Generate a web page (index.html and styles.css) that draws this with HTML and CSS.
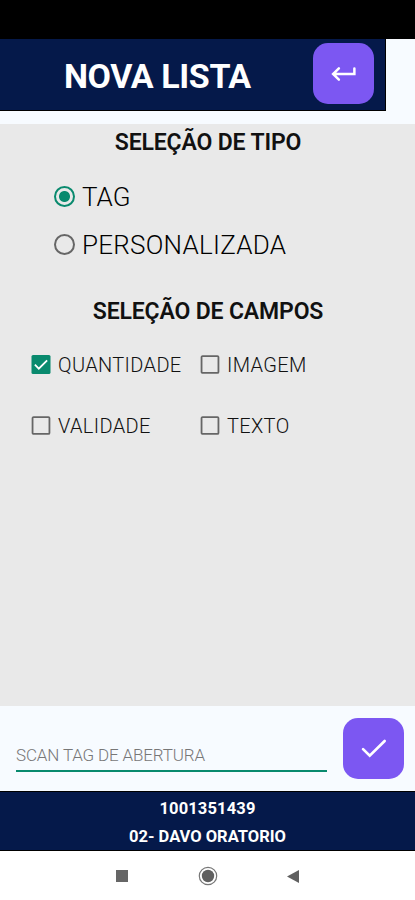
FILE: index.html
```
<!DOCTYPE html>
<html lang="pt-BR">

<head>
  <meta charset="UTF-8">
  <title>Nova Lista</title>
  <link rel="stylesheet" href="styles.css">
</head>

<body>
  <div class="status-bar"></div>

  <header class="header">
    <h1 class="title">NOVA LISTA</h1>
    <button class="btn" type="button" aria-label="Voltar">
      <svg class="icon" width="30" height="30" viewBox="0 0 24 24">
        <path d="M20.3 7.6V12H3.5M7.9 7.5L3.3 12l4.6 4.5" />
      </svg>
    </button>
  </header>

  <main class="content">
    <h2 class="subtitle">SELEÇÃO DE TIPO</h2>
    <div class="types">
      <label class="type"><input type="radio" name="tipo" checked><span>TAG</span></label>
      <label class="type"><input type="radio" name="tipo"><span class="custom">PERSONALIZADA</span></label>
    </div>

    <h2 class="subtitle fields-title">SELEÇÃO DE CAMPOS</h2>
    <div class="fields">
      <label class="field">
        <svg class="box checked" viewBox="0 0 18 18">
          <rect width="18" height="18" rx="1.5" />
          <path d="M3.2 9.2l3.7 3.7 7.9-7.9" />
        </svg>
        <span>QUANTIDADE</span>
      </label>
      <label class="field">
        <svg class="box" viewBox="0 0 18 18"><rect x="1" y="1" width="16" height="16" rx="1" /></svg>
        <span>IMAGEM</span>
      </label>
      <label class="field">
        <svg class="box" viewBox="0 0 18 18"><rect x="1" y="1" width="16" height="16" rx="1" /></svg>
        <span>VALIDADE</span>
      </label>
      <label class="field">
        <svg class="box" viewBox="0 0 18 18"><rect x="1" y="1" width="16" height="16" rx="1" /></svg>
        <span>TEXTO</span>
      </label>
    </div>
  </main>

  <form class="scan">
    <input class="scan-input" type="text" placeholder="SCAN TAG DE ABERTURA">
    <button class="btn" type="button" aria-label="Confirmar">
      <svg class="icon" width="32" height="32" viewBox="0 0 24 24">
        <path d="M3.8 12.1l5 4.9L20 6" />
      </svg>
    </button>
  </form>

  <footer class="footer">
    <span class="code">1001351439</span>
    <span class="store">02- DAVO ORATORIO</span>
  </footer>

  <nav class="nav">
    <svg width="20" height="20" viewBox="0 0 20 20"><rect x="4" y="4" width="12" height="12" fill="#666" /></svg>
    <svg width="20" height="20" viewBox="0 0 20 20">
      <circle cx="10" cy="10" r="8.7" fill="none" stroke="#777" stroke-width="1.2" />
      <circle cx="10" cy="10" r="6.2" fill="#606060" />
    </svg>
    <svg width="20" height="20" viewBox="0 0 20 20"><path d="M3 10.5L15 4v13z" fill="#606060" /></svg>
  </nav>
</body>

</html>
```

FILE: styles.css
```
* {
  box-sizing: border-box;
}

body {
  margin: 0;
  height: 900px;
  display: flex;
  flex-direction: column;
  overflow: hidden;
  font-family: Roboto, sans-serif;
  background-color: #f7fbff;
}

.status-bar {
  height: 39px;
  background-color: #000;
}

.header {
  display: flex;
  justify-content: space-between;
  align-items: flex-start;
  width: 386px;
  height: 72px;
  padding: 4px 11px 0 64px;
  margin-bottom: 13px;
  background-color: #05194a;
  border-right: 1px solid #000;
  border-bottom: 1px solid #000;
}

.title {
  margin: 13px 0 0;
  font-size: 34px;
  line-height: 41px;
  font-weight: 700;
  letter-spacing: -0.4px;
  color: #fff;
  white-space: nowrap;
}

.btn {
  display: flex;
  justify-content: center;
  align-items: center;
  flex: none;
  width: 61px;
  height: 61px;
  padding: 0;
  border: none;
  border-radius: 15px;
  background-color: #7c57f2;
}

.icon {
  fill: none;
  stroke: #fff;
  stroke-width: 2;
  stroke-linecap: round;
}

.content {
  height: 582px;
  padding-top: 5px;
  background-color: #e9e9e9;
}

.subtitle {
  margin: 0;
  padding-left: 1px;
  font-size: 23px;
  line-height: 28px;
  font-weight: 600;
  letter-spacing: -0.15px;
  text-align: center;
  color: #111;
}

.types {
  padding: 16px 0 0 54px;
}

.type {
  display: flex;
  align-items: center;
  gap: 7px;
  height: 48px;
  font-size: 26px;
  font-weight: 300;
  color: #000;
}

.type input {
  appearance: none;
  width: 21px;
  height: 21px;
  margin: 0 0 2px;
  border: 2px solid #666;
  border-radius: 50%;
}

.type input:checked {
  border-color: #098a6e;
  background: radial-gradient(circle, #098a6e 5px, transparent 6px);
}

.custom {
  letter-spacing: 0.25px;
}

.fields-title {
  margin-top: 29px;
}

.fields {
  display: grid;
  grid-template-columns: 169px 1fr;
  grid-auto-rows: 60px;
  row-gap: 1px;
  padding: 9px 0 0 31px;
}

.field {
  display: flex;
  align-items: center;
  gap: 7px;
  font-size: 20px;
  font-weight: 300;
  letter-spacing: 0.35px;
  color: #111;
}

.box {
  width: 20px;
  height: 19px;
  margin-bottom: 1px;
  fill: none;
  stroke: #666;
  stroke-width: 1.7;
}

.checked rect {
  fill: #098a6e;
  stroke: none;
}

.checked path {
  stroke: #fff;
}

/* scan row */
.scan {
  display: flex;
  align-items: flex-start;
  justify-content: space-between;
  height: 85px;
  padding: 12px 11px 0 16px;
}

.scan-input {
  width: 311px;
  height: 34px;
  margin-top: 20px;
  padding: 1px 0 0;
  border: none;
  border-bottom: 2px solid #098a6e;
  background: none;
  font-family: inherit;
  font-size: 17px;
  font-weight: 300;
  letter-spacing: -0.15px;
}

.scan-input::placeholder {
  color: #777;
}

.footer {
  display: flex;
  flex-direction: column;
  align-items: center;
  height: 60px;
  padding-top: 3px;
  border-top: 1px solid #000;
  border-bottom: 1px solid #000;
  background-color: #05194a;
  font-size: 16.5px;
  line-height: 28px;
  font-weight: 700;
  color: #fff;
}

.code {
  letter-spacing: 0.15px;
}

.nav {
  display: flex;
  justify-content: center;
  gap: 66px;
  height: 49px;
  padding-top: 15px;
  background-color: #fff;
}
```
